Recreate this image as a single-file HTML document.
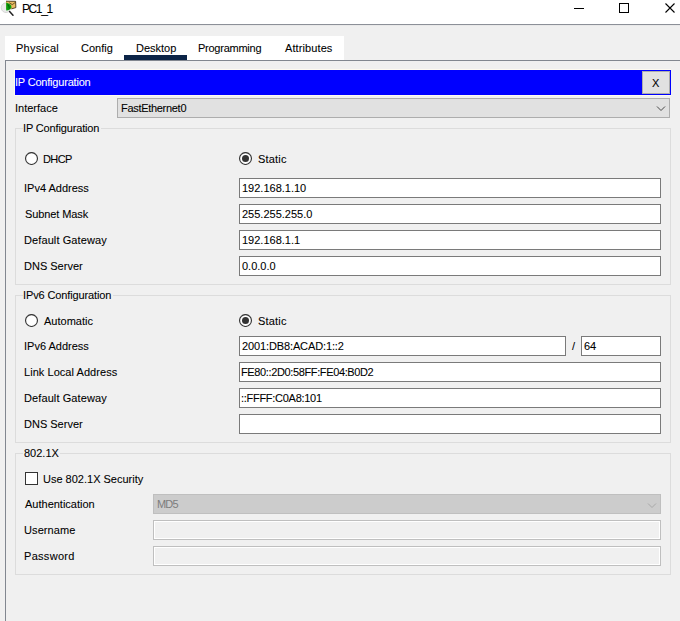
<!DOCTYPE html>
<html><head><meta charset="utf-8">
<style>
html,body{margin:0;padding:0;}
body{width:680px;height:621px;overflow:hidden;position:relative;background:#f0f0f0;font-family:"Liberation Sans",sans-serif;font-size:11px;line-height:13px;color:#000;-webkit-text-stroke:0.08px currentColor;}
.a{position:absolute;}
.t{position:absolute;white-space:nowrap;font-size:11px;line-height:13px;}
.f{position:absolute;box-sizing:border-box;background:#fff;border:1px solid #7a7a7a;height:20px;}
.g{position:absolute;box-sizing:border-box;border:1px solid #dcdcdc;}
.gl{position:absolute;white-space:nowrap;background:#f0f0f0;padding:0 2px 0 0;line-height:13px;}
.df{position:absolute;box-sizing:border-box;background:#f0f0f0;border:1px solid #bfbfbf;box-shadow:inset 0 0 0 1px #fff;height:20px;}
</style></head><body>
<!-- title bar -->
<div class="a" style="left:0;top:0;width:680px;height:24px;background:#fff;"></div>
<div class="a" style="left:0;top:24px;width:680px;height:1px;background:#8c9098;"></div>
<div class="a" style="left:0;top:25px;width:680px;height:1px;background:#e9e9e9;"></div>
<svg class="a" style="left:0;top:0" width="18" height="18" viewBox="0 0 18 18">
  <circle cx="6" cy="7.7" r="4.8" fill="#ececec" stroke="#d2d2d2" stroke-width="0.9"/>
  <path d="M6 1.1 L15.9 1.3 L15.9 7.6 L11.4 8.9 L6 8.9 Z" fill="#e9bb63"/>
  <path d="M6 1.2 L15.6 1.3 L15.9 7.6 L11.4 8.9" fill="none" stroke="#2e2610" stroke-width="0.8"/>
  <path d="M9.2 2.8 L12.3 4.6 L15.5 2.3" fill="none" stroke="#4a3a12" stroke-width="0.8"/>
  <path d="M6.2 2.6 Q11.8 4.2 11.4 7.2 Q10.8 10.2 6.2 10.6 Z" fill="#0aa010"/>
  <path d="M7.6 4.4 Q9.8 6.2 9.2 8.6" fill="none" stroke="#05600a" stroke-width="1.2"/>
  <path d="M9.6 11.6 L13 15.3" stroke="#222" stroke-width="1.5" stroke-linecap="round"/>
</svg>
<div class="t" style="left:22px;top:2px;font-size:12px;line-height:14px;letter-spacing:-1.4px;color:#000;">PC1_1</div>
<div class="a" style="left:574px;top:8px;width:10px;height:1px;background:#000;"></div>
<div class="a" style="left:619px;top:3px;width:10px;height:10px;box-sizing:border-box;border:1px solid #000;"></div>
<svg class="a" style="left:664px;top:2px" width="13" height="13" viewBox="0 0 13 13"><path d="M1.5 1.5 L10.5 10.5 M10.5 1.5 L1.5 10.5" stroke="#000" stroke-width="1.1"/></svg>

<!-- tabs -->
<div class="a" style="left:5px;top:36px;width:339px;height:24px;background:#fff;"></div>
<div class="a" style="left:124px;top:55px;width:63px;height:5px;background:#0c2447;"></div>
<div class="a" style="left:5px;top:60px;width:675px;height:1px;background:#828790;"></div>
<div class="a" style="left:5px;top:60px;width:1px;height:561px;background:#828790;"></div>
<div class="t" style="left:16px;top:42px;letter-spacing:0.25px;">Physical</div>
<div class="t" style="left:81px;top:42px;">Config</div>
<div class="t" style="left:136px;top:42px;">Desktop</div>
<div class="t" style="left:198px;top:42px;letter-spacing:-0.25px;">Programming</div>
<div class="t" style="left:285px;top:42px;letter-spacing:0.1px;">Attributes</div>

<!-- blue header -->
<div class="a" style="left:14px;top:69px;width:657px;height:27px;background:#fdfaf0;"></div>
<div class="a" style="left:15px;top:70px;width:656px;height:25px;background:#0000ff;"></div>
<div class="t" style="left:15px;top:76px;color:#fff;letter-spacing:-0.2px;">IP Configuration</div>
<div class="a" style="left:642px;top:71px;width:28px;height:23px;box-sizing:border-box;background:#e1e1e1;border:1px solid #adadad;"></div>
<div class="t" style="left:652px;top:77px;">X</div>

<!-- interface -->
<div class="t" style="left:15px;top:102px;">Interface</div>
<div class="a" style="left:117px;top:98px;width:553px;height:20px;box-sizing:border-box;background:#e1e1e1;border:1px solid #adadad;"></div>
<div class="t" style="left:121px;top:102px;letter-spacing:-0.3px;">FastEthernet0</div>
<svg class="a" style="left:656px;top:105px" width="11" height="8" viewBox="0 0 11 8"><path d="M1 1.5 L5 5.5 L9 1.5" fill="none" stroke="#404040" stroke-width="0.95"/></svg>

<!-- IP Configuration group -->
<div class="g" style="left:15px;top:128px;width:656px;height:157px;"></div>
<div class="gl" style="left:23px;top:122px;letter-spacing:-0.15px;">IP Configuration</div>
<svg class="a" style="left:25px;top:152px" width="13" height="13" viewBox="0 0 13 13"><circle cx="6.5" cy="6.5" r="5.95" fill="#fff" stroke="#383838" stroke-width="1.15"/></svg>
<div class="t" style="left:43px;top:153px;letter-spacing:-0.6px;">DHCP</div>
<svg class="a" style="left:239px;top:152px" width="13" height="13" viewBox="0 0 13 13"><circle cx="6.5" cy="6.5" r="5.95" fill="#fff" stroke="#383838" stroke-width="1.15"/><circle cx="6.5" cy="6.5" r="3.5" fill="#333"/></svg>
<div class="t" style="left:258px;top:153px;letter-spacing:0.2px;">Static</div>

<div class="t" style="left:24px;top:182px;">IPv4 Address</div>
<div class="t" style="left:25px;top:208px;letter-spacing:-0.1px;">Subnet Mask</div>
<div class="t" style="left:24px;top:234px;letter-spacing:0.1px;">Default Gateway</div>
<div class="t" style="left:24px;top:260px;">DNS Server</div>
<div class="f" style="left:239px;top:178px;width:422px;"></div>
<div class="f" style="left:239px;top:204px;width:422px;"></div>
<div class="f" style="left:239px;top:230px;width:422px;"></div>
<div class="f" style="left:239px;top:256px;width:422px;"></div>
<div class="t" style="left:242px;top:182px;">192.168.1.10</div>
<div class="t" style="left:242px;top:208px;">255.255.255.0</div>
<div class="t" style="left:242px;top:234px;">192.168.1.1</div>
<div class="t" style="left:242px;top:260px;">0.0.0.0</div>

<!-- IPv6 group -->
<div class="g" style="left:15px;top:295px;width:656px;height:148px;"></div>
<div class="gl" style="left:23px;top:289px;letter-spacing:-0.12px;">IPv6 Configuration</div>
<svg class="a" style="left:25px;top:314px" width="13" height="13" viewBox="0 0 13 13"><circle cx="6.5" cy="6.5" r="5.95" fill="#fff" stroke="#383838" stroke-width="1.15"/></svg>
<div class="t" style="left:44px;top:315px;">Automatic</div>
<svg class="a" style="left:239px;top:314px" width="13" height="13" viewBox="0 0 13 13"><circle cx="6.5" cy="6.5" r="5.95" fill="#fff" stroke="#383838" stroke-width="1.15"/><circle cx="6.5" cy="6.5" r="3.5" fill="#333"/></svg>
<div class="t" style="left:258px;top:315px;letter-spacing:0.2px;">Static</div>

<div class="t" style="left:24px;top:340px;">IPv6 Address</div>
<div class="t" style="left:24px;top:366px;letter-spacing:0.05px;">Link Local Address</div>
<div class="t" style="left:24px;top:392px;letter-spacing:0.1px;">Default Gateway</div>
<div class="t" style="left:24px;top:418px;">DNS Server</div>
<div class="f" style="left:239px;top:336px;width:327px;"></div>
<div class="t" style="left:572px;top:340px;">/</div>
<div class="f" style="left:581px;top:336px;width:80px;"></div>
<div class="f" style="left:239px;top:362px;width:422px;"></div>
<div class="f" style="left:239px;top:388px;width:422px;"></div>
<div class="f" style="left:239px;top:414px;width:422px;"></div>
<div class="t" style="left:242px;top:340px;letter-spacing:-0.12px;">2001:DB8:ACAD:1::2</div>
<div class="t" style="left:584px;top:340px;">64</div>
<div class="t" style="left:241px;top:366px;letter-spacing:-0.37px;">FE80::2D0:58FF:FE04:B0D2</div>
<div class="t" style="left:241px;top:392px;letter-spacing:-0.28px;">::FFFF:C0A8:101</div>

<!-- 802.1X group -->
<div class="g" style="left:15px;top:453px;width:656px;height:122px;"></div>
<div class="gl" style="left:23px;top:447px;padding:0 1px;">802.1X</div>
<div class="a" style="left:25px;top:472px;width:13px;height:13px;box-sizing:border-box;border:1px solid #333;background:#fff;"></div>
<div class="t" style="left:43px;top:473px;">Use 802.1X Security</div>
<div class="t" style="left:25px;top:498px;">Authentication</div>
<div class="t" style="left:24px;top:524px;letter-spacing:0.1px;">Username</div>
<div class="t" style="left:24px;top:550px;letter-spacing:0.3px;">Password</div>
<div class="a" style="left:153px;top:494px;width:508px;height:20px;box-sizing:border-box;background:#cccccc;border:1px solid #bfbfbf;"></div>
<div class="t" style="left:157px;top:498px;color:#7c7c7c;letter-spacing:-0.8px;-webkit-text-stroke:0;">MD5</div>
<svg class="a" style="left:647px;top:501.5px" width="11" height="8" viewBox="0 0 11 8"><path d="M1 1.5 L5 5.5 L9 1.5" fill="none" stroke="#a4a4a4" stroke-width="0.9"/></svg>
<div class="df" style="left:153px;top:520px;width:508px;"></div>
<div class="df" style="left:153px;top:546px;width:508px;"></div>
</body></html>
